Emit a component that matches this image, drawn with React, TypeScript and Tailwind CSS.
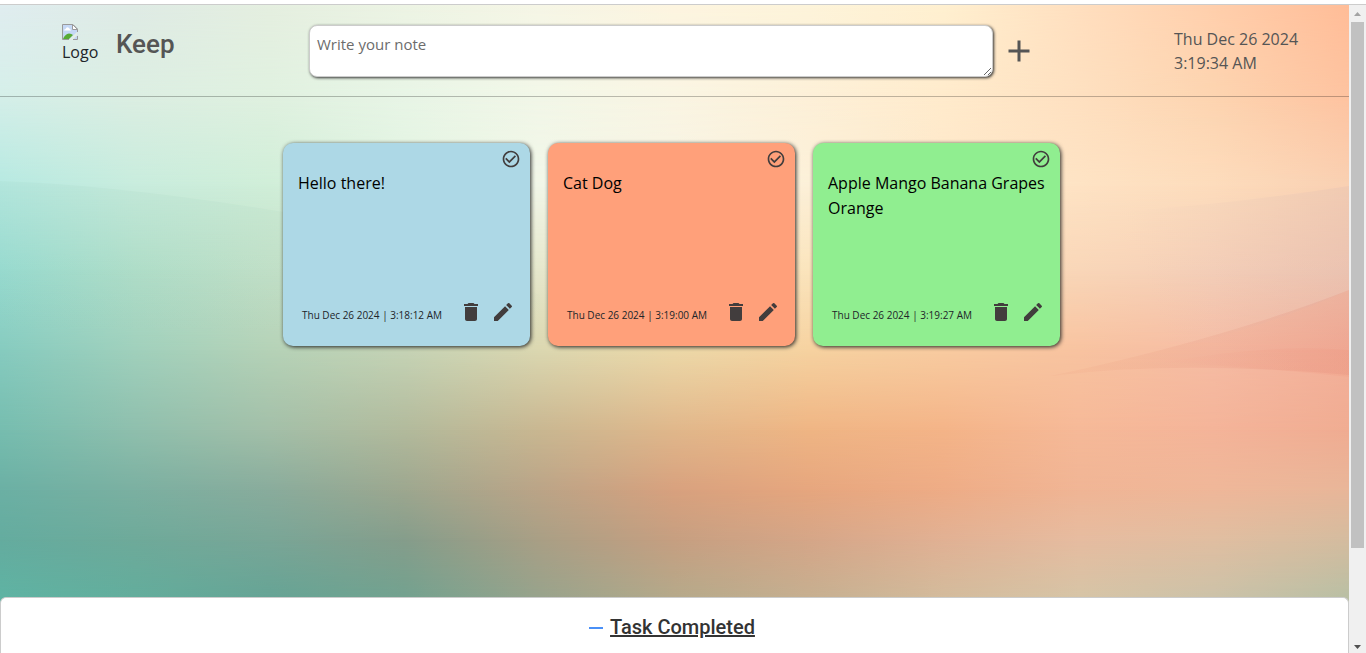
import React from "react";
import { MdAdd, MdCheckCircleOutline, MdDelete, MdEdit, MdRemove } from "react-icons/md";

const columns = ["0%", "10%", "20%", "30%", "40%", "50%", "60%", "70%", "80%", "90%", "100%"];

const rows: { y: number; colors: string[] }[] = [
  { y: 0, colors: ["#e0edf0", "#dfebe5", "#e5efe0", "#edf4e4", "#f6f6e6", "#fdf5e0", "#fdf4da", "#fff0d0", "#ffdfbf", "#ffcfac", "#ffbd98"] },
  { y: 90, colors: ["#d5efe9", "#dceee2", "#e0f1e0", "#e8f5e6", "#f2f7e8", "#faf5e3", "#fdf0d8", "#ffebcc", "#fee0c0", "#fdd4b0", "#fec3a0"] },
  { y: 180, colors: ["#b6e9e1", "#c8ecdd", "#d0eed8", "#e2f5e2", "#f1f6e8", "#f7f4e4", "#fcf0d8", "#fee8ca", "#fee3c4", "#fddcbc", "#f9d0b2"] },
  { y: 265, colors: ["#98dbd0", "#b0dec9", "#c2e0c8", "#d2e2c4", "#e6e7cc", "#f2e6c4", "#fbe4bc", "#fbdcb6", "#f9d6b8", "#f5cfb8", "#f0c5b0"] },
  { y: 345, colors: ["#86cbbf", "#a0d0bc", "#b5d2b7", "#c5d3b5", "#dbd7b0", "#ecd8a8", "#f6d2a0", "#f8cba0", "#f8c3a0", "#f6bca4", "#f3b09a"] },
  { y: 425, colors: ["#76bdaf", "#8fbfad", "#a3bfa8", "#b2ba9c", "#c9b791", "#e0b78b", "#efb584", "#f4b488", "#f6b998", "#f4b499", "#f0ac92"] },
  { y: 485, colors: ["#6bb0a4", "#7bb0a1", "#89ac9c", "#9da78f", "#bba487", "#d8a17e", "#e6a67e", "#eeac86", "#f0b595", "#efb799", "#e8b699"] },
  { y: 535, colors: ["#64ac9f", "#6eaa9a", "#79a697", "#859d8b", "#a99f85", "#c69f81", "#d5a688", "#e1b194", "#e6bca0", "#e0bea1", "#d4bc9f"] },
  { y: 592, colors: ["#5fb3a3", "#63ad9c", "#66a495", "#73a28f", "#98a38c", "#b5a98a", "#c6af90", "#d3bb9c", "#d6c4a6", "#ccc2a8", "#b9bfa4"] },
];

function Backdrop() {
  return (
    <svg
      aria-hidden="true"
      className="absolute inset-0 h-full w-full"
      viewBox="0 0 1349 648"
      preserveAspectRatio="none"
    >
      <defs>
        {rows.map((row, i) => (
          <React.Fragment key={i}>
            <linearGradient id={`row${i}`}>
              {row.colors.map((c, j) => (
                <stop key={j} offset={columns[j]} stopColor={c} />
              ))}
            </linearGradient>
            {i > 0 && (
              <>
                <linearGradient id={`fade${i}`} gradientUnits="userSpaceOnUse" x1="0" x2="0" y1={rows[i - 1].y} y2={row.y}>
                  <stop offset="0" stopColor="#fff" stopOpacity="0" />
                  <stop offset="1" stopColor="#fff" />
                </linearGradient>
                <mask id={`mask${i}`} maskUnits="userSpaceOnUse" x="0" y="0" width="1349" height="648">
                  <rect width="1349" height="648" fill={`url(#fade${i})`} />
                </mask>
              </>
            )}
          </React.Fragment>
        ))}
        <linearGradient id="waveLeft" x1="0" y1="0" x2="0" y2="1">
          <stop offset="0" stopColor="#7fb8a0" stopOpacity="0.08" />
          <stop offset="1" stopColor="#7fb8a0" stopOpacity="0" />
        </linearGradient>
        <linearGradient id="waveRight" gradientUnits="userSpaceOnUse" x1="1140" y1="260" x2="1349" y2="190">
          <stop offset="0" stopColor="#d8bab4" stopOpacity="0" />
          <stop offset="1" stopColor="#d8bab4" stopOpacity="0.24" />
        </linearGradient>
        <linearGradient id="waveCoral" x1="0" y1="0" x2="1" y2="0">
          <stop offset="0" stopColor="#e89878" stopOpacity="0.1" />
          <stop offset="1" stopColor="#e08878" stopOpacity="0.24" />
        </linearGradient>
        <linearGradient id="waveRose" x1="0" y1="0" x2="1" y2="0">
          <stop offset="0" stopColor="#f08878" stopOpacity="0" />
          <stop offset="1" stopColor="#f09078" stopOpacity="0.18" />
        </linearGradient>
      </defs>
      {rows.map((_, i) => (
        <rect key={i} width="1349" height="648" fill={`url(#row${i})`} mask={i > 0 ? `url(#mask${i})` : undefined} />
      ))}
      <path d="M0 176 Q120 180 290 208 Q420 232 540 290 L540 330 L0 330Z" fill="url(#waveLeft)" />
      <path d="M1080 208 Q1200 204 1349 181 L1349 285 Q1240 335 1050 371Z" fill="url(#waveRight)" />
      <path d="M1050 371 Q1220 335 1349 285 L1349 370 Q1180 355 1050 371Z" fill="url(#waveCoral)" />
      <path d="M1160 358 Q1270 338 1349 345 L1349 372 Q1260 362 1160 358Z" fill="url(#waveRose)" />
    </svg>
  );
}

function BrokenImage() {
  return (
    <svg width="16" height="16" viewBox="0 0 16 16" aria-hidden="true" className="block">
      <path d="M0.5 0.5H11L15.5 5V15.5H0.5Z" fill="#c5d8f5" />
      <path d="M2 6.5Q2 5 3.6 5Q4.2 3 6 3.4Q7.6 3.6 7.6 5Q9 5 9 6.5Z" fill="#fff" />
      <path d="M1 15Q3 10 7 9.5Q9.500 9.500 11 11L7 15Z" fill="#57ab35" />
      <path d="M6.500 16L15.500 7.500V11L10.500 16Z" fill="#e4eee6" />
      <path d="M0.500 15.500V0.500H11L15.500 5V8M0.500 15.500H7M11 15.500H15.500V12" fill="none" stroke="#9a9a9a" />
      <path d="M10.500 0.500V5.500H15.500Z" fill="#fff" stroke="#9a9a9a" />
    </svg>
  );
}

function Header() {
  return (
    <header className="flex h-[92px] shrink-0 items-start border-b border-black/25">
      <div className="flex w-[309px] shrink-0 items-start pl-[62px] pt-[19px]">
        <div role="img" aria-label="Logo" className="w-9 shrink-0 text-base leading-6 text-[#212529]">
          <BrokenImage />
          <span className="block leading-6">Logo</span>
        </div>
        <h1 className="ml-[18px] font-[Roboto,sans-serif] text-[26px] font-medium leading-10 text-[#555]">Keep</h1>
      </div>
      <textarea
        aria-label="Write your note"
        placeholder="Write your note"
        className="mt-5 h-[52px] min-w-0 flex-1 resize rounded-lg border border-[#ccc] bg-white px-[7px] py-1.5 text-[15px] leading-6 text-[#212529] shadow-[1px_1px_3px_#333] outline-none placeholder:text-[#6c6c6c]"
      />
      <button type="button" aria-label="Add note" className="ml-2 mr-[137px] mt-7 shrink-0 text-[#555]">
        <MdAdd size={36} />
      </button>
      <div className="w-[175px] shrink-0 whitespace-nowrap pt-[22px] text-base leading-6 text-[#555]">
        <div>Thu Dec 26 2024</div>
        <div>3:19:34 AM</div>
      </div>
    </header>
  );
}

type NoteProps = { text: string; stamp: string; tone: string };

const notes: NoteProps[] = [
  { text: "Hello there!", stamp: "Thu Dec 26 2024 | 3:18:12 AM", tone: "bg-[#add8e6]" },
  { text: "Cat Dog", stamp: "Thu Dec 26 2024 | 3:19:00 AM", tone: "bg-[#ffa07a]" },
  { text: "Apple Mango Banana Grapes Orange", stamp: "Thu Dec 26 2024 | 3:19:27 AM", tone: "bg-[#90ee90]" },
];

function Note({ text, stamp, tone }: NoteProps) {
  return (
    <article className={`flex h-[203px] w-[247px] flex-col rounded-[10px] text-[#423d3d] shadow-[1px_1px_4px_#222] ${tone}`}>
      <div className="flex justify-end pr-[9px] pt-1.5">
        <button type="button" aria-label="Mark as completed">
          <MdCheckCircleOutline size={20} />
        </button>
      </div>
      <p className="flex-1 px-[15px] pt-0.5 text-base leading-[25px] text-black">{text}</p>
      <div className="flex items-center justify-between pb-[21px] pl-[19px] pr-[15px]">
        <time className="pt-1.5 text-[10px] leading-5 text-[#212529]">{stamp}</time>
        <div className="flex gap-2">
          <button type="button" aria-label="Delete note">
            <MdDelete size={24} />
          </button>
          <button type="button" aria-label="Edit note">
            <MdEdit size={24} />
          </button>
        </div>
      </div>
    </article>
  );
}

function ScrollRail() {
  return (
    <div aria-hidden="true" className="flex w-[17px] shrink-0 flex-col items-center bg-[#f0f0f0]">
      <svg width="17" height="17" viewBox="0 0 17 17" className="shrink-0">
        <path d="M5 11L8.500 7L12 11Z" fill="#a3a3a3" />
      </svg>
      <div className="flex min-h-0 w-full flex-1 flex-col px-0.5">
        <div className="flex-[6] bg-[#c1c1c1]" />
        <div className="flex-1" />
      </div>
      <svg width="17" height="17" viewBox="0 0 17 17" className="shrink-0">
        <path d="M5 9L8.500 13L12 9Z" fill="#505050" />
      </svg>
    </div>
  );
}

export default function App() {
  return (
    <div className="flex h-screen flex-col overflow-hidden bg-white font-['Open_Sans','Noto_Sans',sans-serif]">
      <div className="h-[5px] shrink-0 border-b border-[#ccc]" />
      <div className="flex min-h-0 flex-1">
        <div className="relative min-w-0 flex-1">
          <Backdrop />
          <div className="relative flex h-full flex-col">
            <Header />
            <main className="flex flex-1 flex-wrap content-start justify-center gap-[18px] pr-1.5 pt-[46px]">
              {notes.map((note) => (
                <Note key={note.stamp} {...note} />
              ))}
            </main>
            <section className="flex h-14 shrink-0 items-start justify-center rounded-t-md border border-b-0 border-[#ccc] bg-white pr-2.5 pt-[15px]">
              <div className="flex items-center gap-0.5">
                <MdRemove size={24} className="mt-0.5 text-[#4a90f7]" />
                <h2 className="font-[Roboto,sans-serif] text-xl font-medium leading-7 text-[#333] underline">
                  Task Completed
                </h2>
              </div>
            </section>
          </div>
        </div>
        <ScrollRail />
      </div>
    </div>
  );
}
